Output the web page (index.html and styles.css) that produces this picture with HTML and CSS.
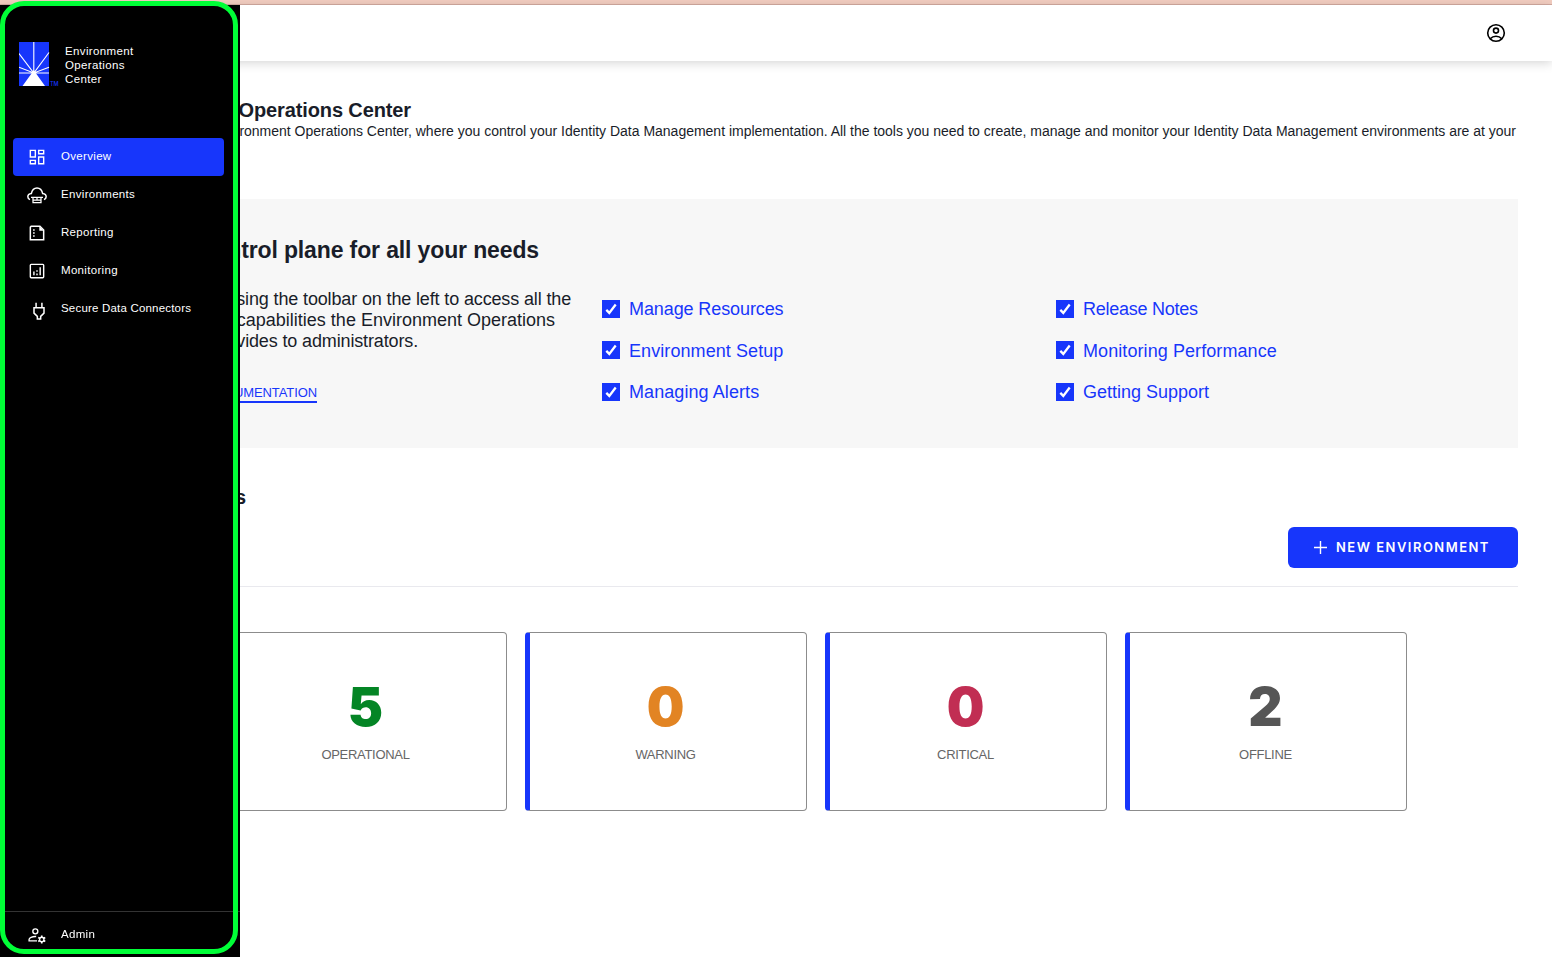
FILE: index.html
```html
<!DOCTYPE html>
<html lang="en">
<head>
<meta charset="utf-8">
<title>Environment Operations Center</title>
<link rel="stylesheet" href="styles.css">
</head>
<body>
<div class="strip"></div>
<header class="topbar">
  <svg class="account" viewBox="0 0 20 20" fill="none" stroke="#000" stroke-width="1.6"><circle cx="10" cy="10" r="8.3"/><circle cx="10" cy="7.6" r="2.5"/><path d="M4.2 15.8C5.8 14.1 7.8 13.3 10 13.3s4.2.8 5.8 2.5"/></svg>
</header>
<main class="page">
  <h1 class="title">Environment Operations Center</h1>
  <p class="intro"><span>Environment Operations Center, where you control your Identity Data Management implementation. All the tools you need to create, manage and monitor your Identity Data Management environments are at your</span></p>
  <section class="panel">
    <h2 class="panel-title">One control plane for all your needs</h2>
    <div class="panel-grid">
      <div class="about">
        <p class="line l1">using the toolbar on the left to access all the</p>
        <p class="line l2">capabilities the Environment Operations</p>
        <p class="line l3">provides to administrators.</p>
        <div class="doc-row"><a class="doc">DOCUMENTATION</a></div>
      </div>
      <ul class="links">
        <li><svg class="check" viewBox="0 0 18 18"><path class="box" d="M0 0h18v18H0z"/><path class="tick" d="M4.300 9.900l3 3 6.400-8.400"/></svg><a class="tight">Manage Resources</a></li>
        <li><svg class="check" viewBox="0 0 18 18"><path class="box" d="M0 0h18v18H0z"/><path class="tick" d="M4.300 9.900l3 3 6.400-8.400"/></svg><a class="loose">Environment Setup</a></li>
        <li><svg class="check" viewBox="0 0 18 18"><path class="box" d="M0 0h18v18H0z"/><path class="tick" d="M4.300 9.900l3 3 6.400-8.400"/></svg><a class="loose">Managing Alerts</a></li>
      </ul>
      <ul class="links">
        <li><svg class="check" viewBox="0 0 18 18"><path class="box" d="M0 0h18v18H0z"/><path class="tick" d="M4.300 9.900l3 3 6.400-8.400"/></svg><a class="tighter">Release Notes</a></li>
        <li><svg class="check" viewBox="0 0 18 18"><path class="box" d="M0 0h18v18H0z"/><path class="tick" d="M4.300 9.900l3 3 6.400-8.400"/></svg><a class="loose">Monitoring Performance</a></li>
        <li><svg class="check" viewBox="0 0 18 18"><path class="box" d="M0 0h18v18H0z"/><path class="tick" d="M4.300 9.900l3 3 6.400-8.400"/></svg><a>Getting Support</a></li>
      </ul>
    </div>
  </section>
  <h2 class="section-title">Environments</h2>
  <div class="actions">
    <button class="new"><svg viewBox="0 0 14 14" stroke="#fff" stroke-width="1.5"><path d="M7 0v14M0 7h14"/></svg><span>NEW ENVIRONMENT</span></button>
  </div>
  <div class="cards">
    <div class="card"><strong class="ok">5</strong><span>OPERATIONAL</span></div>
    <div class="card"><strong class="warn">0</strong><span>WARNING</span></div>
    <div class="card"><strong class="crit">0</strong><span>CRITICAL</span></div>
    <div class="card"><strong class="off">2</strong><span>OFFLINE</span></div>
  </div>
</main>
<aside class="sidebar">
  <div class="brand">
    <svg class="logo" viewBox="0 0 40 44">
      <path fill="#1736fb" d="M0 0h30v44H0z"/>
      <path fill="none" stroke="#fff" stroke-width="1.1" d="M14.800 0v31M0 11.500L14.800 31 30 10.500M0 25.200L14.800 31 30 25.200M0 31h30"/>
      <path fill="#fff" d="M14.800 28l3 4.500L26 44H3.500l8.300-11.500z"/>
      <text x="31" y="43.800" font-size="5.500" font-weight="500" fill="#1736fb" font-family="Inter">TM</text>
    </svg>
    <div class="brand-name">Environment<br>Operations<br>Center</div>
  </div>
  <nav class="nav">
    <a class="item active"><svg viewBox="0 0 24 24" fill="none" stroke="#fff" stroke-width="1.700"><path d="M4 4h6v8H4zM14 4h6v4h-6zM14 12h6v8h-6zM4 16h6v4H4z"/></svg><span>Overview</span></a>
    <a class="item"><svg viewBox="0 0 24 24" fill="none" stroke="#fff" stroke-width="1.800"><path d="M3.600 17.500C2 16.900 1 15.900 1 14.200c0-2.300 1.800-3.700 4.200-4C6 6.500 8.600 3.600 12 3.600s6 2.900 6.800 6.600c2.400.3 4.200 1.700 4.200 4 0 1.700-1 2.700-2.600 3.300"/><path stroke-width="1.500" d="M4.800 14.700h14.400M7.200 14v7.200h9.600V14M12 14v4M7.200 18h9.600"/></svg><span>Environments</span></a>
    <a class="item"><svg viewBox="0 0 24 24" fill="none" stroke="#fff" stroke-width="1.800"><path d="M5 4h10.500L20 8.500V20H4V5z"/><path fill="#fff" stroke="none" d="M14.800 4v5.400H20z"/><path stroke-width="1.800" d="M7.300 8.300h1.900M7.300 12h1.900M7.300 15.700h1.900"/></svg><span>Reporting</span></a>
    <a class="item"><svg viewBox="0 0 24 24" fill="none" stroke="#fff" stroke-width="1.700"><rect x="4" y="4" width="16" height="16" rx="1"/><path d="M8.300 12.500V17M12 15v2M12 11v2M15.800 7.500V17"/></svg><span>Monitoring</span></a>
    <a class="item"><svg class="plug" viewBox="0 0 24 24" fill="none" stroke="#fff" stroke-width="1.800"><path d="M8.500 2v6M15.500 2v6M6 8h12v6.500L14 18.500V21.500h-4v-3l-4-4z"/></svg><span class="long">Secure Data Connectors</span></a>
  </nav>
  <div class="bottom">
    <a class="item"><svg viewBox="0 0 24 24" fill="none" stroke="#fff" stroke-width="1.600"><circle cx="10" cy="7.600" r="3"/><path d="M12 19H2.500v-1.700c0-1.600 3.500-3.800 8.500-3.500"/><circle cx="17.700" cy="17.300" r="2.600"/><path stroke-width="2" d="M17.700 12.500v2M17.700 20.100v2M13.500 14.900l1.800 1M20.100 18.700l1.800 1M13.500 19.700l1.800-1M20.100 15.900l1.800-1"/></svg><span>Admin</span></a>
  </div>
  <div class="outline"></div>
</aside>
</body>
</html>
```

FILE: styles.css
```css
* { box-sizing: border-box; }
body { margin: 0; height: 957px; overflow: hidden; background: #fff; color: #191d29; font-family: "Liberation Sans", Arial, sans-serif; }
h1, h2, p, ul { margin: 0; padding: 0; }
ul { list-style: none; }
.strip { height: 5px; background: #f2cdc0; border-bottom: 1px solid #d3aaa0; }
.topbar { height: 56px; background: #fff; box-shadow: 0 2px 10px rgba(0,0,0,.17); display: flex; justify-content: flex-end; padding: 18px 46px 0 0; }
.account { width: 20px; height: 20px; }
.page { padding: 36px 34px 0 75px; }
.title { width: 336px; font-size: 20px; line-height: 26px; font-weight: 700; display: flex; justify-content: flex-end; white-space: nowrap; letter-spacing: -.12px; }
.intro { height: 76px; display: flex; justify-content: flex-end; padding-right: 2px; font-size: 14px; line-height: 17px; letter-spacing: -.01px; white-space: nowrap; }
.panel { height: 249px; background: #f7f7f7; padding: 36px 0 0 73px; }
.panel-title { width: 391px; display: flex; justify-content: flex-end; font-size: 23px; line-height: 30px; font-weight: 700; letter-spacing: -.13px; white-space: nowrap; }
.panel-grid { display: grid; grid-template-columns: 454px 454px 1fr; }
.about { padding-top: 24px; font-size: 18px; line-height: 21px; letter-spacing: -.14px; }
.line { display: flex; justify-content: flex-end; white-space: nowrap; }
.l1 { width: 423px; }
.l2 { width: 407px; letter-spacing: 0; }
.l3 { width: 270px; }
.doc-row { width: 169px; display: flex; justify-content: flex-end; padding-top: 33px; }
.doc { font-size: 13px; line-height: 16px; letter-spacing: -.1px; color: #1736fb; border-bottom: 2px solid #1736fb; }
.links { padding-top: 23px; color: #1736fb; }
.links li { height: 41.500px; padding-top: 12px; display: flex; align-items: flex-start; gap: 9px; font-size: 18px; line-height: 18px; white-space: nowrap; }
.links li:nth-child(2) .check { margin-top: -.5px; }
.tight { letter-spacing: -.1px; }
.tighter { letter-spacing: -.25px; }
.loose { letter-spacing: .08px; }
.check { width: 18px; height: 18px; flex: none; }
.box { fill: #1736fb; }
.tick { fill: none; stroke: #fff; stroke-width: 2.3; }
.section-title { width: 171px; margin-top: 36px; display: flex; justify-content: flex-end; font-size: 20px; line-height: 26px; font-weight: 700; }
.actions { height: 77px; padding-top: 17px; border-bottom: 1px solid #e9e9ee; display: flex; justify-content: flex-end; align-items: flex-start; }
.new { width: 230px; height: 41px; border: 0; border-radius: 6px; background: #1736fb; color: #fff; font: 600 13px/20px Inter, sans-serif; letter-spacing: 1.480px; display: flex; align-items: center; padding: 0 0 1px 26px; gap: 9px; white-space: nowrap; }
.new svg { width: 13px; height: 13px; }
.cards { display: flex; gap: 18px; padding: 45px 0 0 150px; }
.card { width: 282px; height: 179px; border: 1px solid #8c8c8c; border-left: 5px solid #1736fb; border-radius: 4px; display: flex; flex-direction: column; align-items: center; padding: 43px 5px 0 0; }
.card strong { font: 900 53px/62px Inter, sans-serif; }
.card span { margin-top: 8px; font-size: 13px; line-height: 18px; color: #666; letter-spacing: -.3px; }
.ok { color: #048525; }
.warn { color: #e28423; }
.crit { color: #c12e53; }
.off { color: #565656; }
.sidebar { position: fixed; left: 0; top: 5px; width: 240px; height: 952px; background: #000; color: #fff; display: flex; flex-direction: column; }
.brand { height: 133px; padding: 37px 0 0 19px; display: flex; gap: 6px; }
.logo { width: 40px; height: 44px; flex: none; }
.brand-name { padding-top: 2px; font-size: 11.500px; line-height: 14px; letter-spacing: .36px; }
.nav { flex: 1; }
.item { height: 38px; margin: 0 16px 0 13px; padding-left: 14px; display: flex; align-items: center; gap: 14px; border-radius: 4px; font-size: 11.500px; letter-spacing: .32px; white-space: nowrap; }
.item svg { width: 20px; height: 20px; flex: none; }
.item span { margin-bottom: 2px; }
.item .long { letter-spacing: .19px; }
.item .plug { margin: 4px -2px 0 2px; }
.active { background: #1736fb; }
.bottom { height: 46px; border-top: 1px solid #333; padding-top: 4px; }
.outline { position: absolute; left: 0; top: -4px; width: 238px; height: 953px; border: 5px solid #00ff37; border-radius: 24px; }
```
